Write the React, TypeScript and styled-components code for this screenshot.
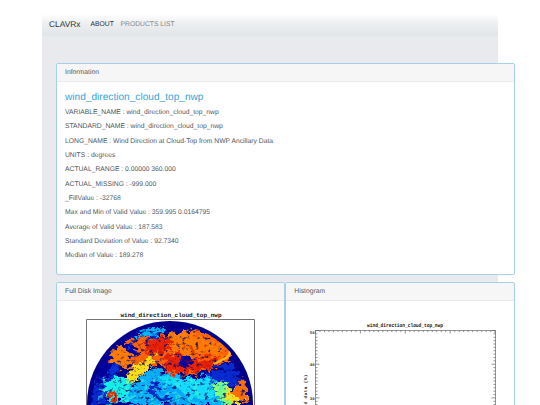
import React from "react";
import styled, { createGlobalStyle } from "styled-components";

const GlobalStyle = createGlobalStyle`
  * { box-sizing: border-box; }
  html, body { margin: 0; height: 100%; overflow: hidden; background: #fff; }
  body {
    font-family: "Liberation Sans", Arial, sans-serif;
    color: #53575d;
    text-rendering: geometricPrecision;
  }
`;

const Page = styled.main`
  width: 456px;
  height: 391px;
  margin: 14px 0 0 42px;
  background: #e8eaee;
`;

const Navbar = styled.nav`
  display: flex;
  align-items: center;
  height: 22px;
  padding: 0 7px 1px;
  background: linear-gradient(#fff, #eceef0 45%, #e2e5e8);
`;

const Brand = styled.a`
  width: 41.5px;
  font-size: 8.4px;
  line-height: 11px;
  margin-top: -1px;
  color: #303438;
`;

const NavLink = styled.a<{ $active?: boolean }>`
  margin-right: 6.8px;
  font-size: 6.75px;
  white-space: nowrap;
  color: ${(p) => (p.$active ? "#2b2f33" : "#85888c")};
`;

const Content = styled.div`
  display: flex;
  flex-direction: column;
  gap: 7px;
  width: 458.5px;
  margin: 27px 0 0 14px;
`;

const Columns = styled.div`
  display: flex;
`;

const Card = styled.section<{ $height: number }>`
  flex: 1 0 auto;
  width: 229px;
  height: ${(p) => p.$height}px;
  overflow: hidden;
  background: #fff;
  border: 1px solid #a5d0e7;
  border-radius: 2px;
  ${Content} > & { width: 100%; flex: none; }
`;

const CardHeader = styled.header`
  height: 18px;
  padding: 0 8px;
  font-size: 6.8px;
  line-height: 18.4px;
  background: #f6f6f6;
  border-bottom: 1px solid #e9eaeb;
`;

const CardBody = styled.div`
  padding: 9px 8px 8px;
`;

const Title = styled.h1`
  margin: 0 0 1px;
  font-size: 10.15px;
  font-weight: 400;
  line-height: 14px;
  color: #3ba4d8;
`;

const Fact = styled.p`
  margin: 0;
  font-size: 6.76px;
  line-height: 14.35px;
`;

const Plot = styled.svg`
  display: block;
  width: 227px;
  height: 104px;
`;

const facts = [
  "VARIABLE_NAME : wind_direction_cloud_top_nwp",
  "STANDARD_NAME : wind_direction_cloud_top_nwp",
  "LONG_NAME : Wind Direction at Cloud-Top from NWP Ancillary Data",
  "UNITS : degrees",
  "ACTUAL_RANGE : 0.00000 360.000",
  "ACTUAL_MISSING : -999.000",
  "_FillValue : -32768",
  "Max and Min of Valid Value : 359.995 0.0164795",
  "Average of Valid Value : 187.583",
  "Standard Deviation of Value : 92.7340",
  "Median of Value : 189.278",
];

const mono = '"Liberation Mono", monospace';

const regions: [string, string][] = [
  ["#0632d8", "M96 378 L116 340 L150 326 L166 332 L145 346 L122 368 L100 405 L90 405Z"],
  ["#0000a0", "M103 352 L132 331 L145 330 L130 344 L113 365 L95 390Z"],
  ["#08b4f4", "M135 333 L151 326 L166 330 L158 335 L143 337Z"],
  ["#ff7a00", "M109 352 L121 346 L130 353 L138 364 L124 369 L111 361Z"],
  ["#ff6200", "M124 342 L139 337 L157 340 L174 329 L199 330 L222 341 L234 348 L231 358 L214 368 L190 376 L170 375 L159 363 L145 371 L130 362 L140 350Z"],
  ["#e82400", "M145 341 L172 336 L176 347 L160 353 L147 354Z M164 356 L180 352 L198 362 L219 357 L214 367 L180 375 L166 369Z"],
  ["#ff7a00", "M168 332 L197 334 L225 347 L221 356 L200 352 L189 357 L172 352Z"],
  ["#ffdd15", "M119 382 L137 364 L156 352 L154 364 L138 378 L124 392Z"],
  ["#06aef8", "M123 396 L140 378 L155 366 L170 375 L187 378 L207 376 L226 391 L229 406 L134 406Z"],
  ["#13efe8", "M104 382 L120 376 L133 383 L126 400 L108 402Z"],
  ["#13dcff", "M158 377 L183 378 L207 379 L215 398 L194 398 L176 388Z"],
  ["#062bd0", "M205 373 L218 368 L232 362 L242 382 L226 386 L210 380Z"],
  ["#86ff78", "M211 385 L224 381 L235 390 L230 405 L219 401Z"],
  ["#ffde17", "M224 386 L234 391 L244 380 L249 399 L232 408Z"],
  ["#ff6f00", "M230 393 L243 378 L248 390 L246 406 L238 398Z"],
  ["#0000a5", "M178 359 L190 355 L195 362 L187 367 L177 365Z"],
  ["#0000a0", "M125 350 L136 346 L141 350 L132 355Z M167 329 L186 328 L190 332 L171 333Z"],
  ["#062bd0", "M152 380 L164 388 L174 406 L163 404 L148 390Z M91 389 L101 387 L108 405 L91 405Z"],
  ["#00a6ff", "M154 392 L166 382 L179 390 L184 402 L168 398Z"],
  ["#e83200", "M108 394 L114 390 L118 397 L112 401Z"],
];

function DiskPlot() {
  return (
    <Plot viewBox="57 301 227 104">
      <defs>
        <clipPath id="disk"><circle cx="170" cy="404" r="79.5" /></clipPath>
        <filter id="rough" x="-5%" y="-5%" width="110%" height="110%" colorInterpolationFilters="sRGB">
          <feTurbulence type="fractalNoise" baseFrequency=".17 .25" numOctaves="4" seed="9" />
          <feDisplacementMap in="SourceGraphic" scale="15" xChannelSelector="R" yChannelSelector="G" />
          <feGaussianBlur stdDeviation=".55" />
        </filter>
        <filter id="navyGrain" x="0" y="0" width="100%" height="100%" colorInterpolationFilters="sRGB">
          <feTurbulence type="fractalNoise" baseFrequency=".22 .3" numOctaves="4" seed="12" />
          <feColorMatrix values="0 0 0 0 .02  0 0 0 0 .03  0 0 0 0 .5  5 0 0 0 -2.9" />
        </filter>
        <filter id="brightGrain" x="0" y="0" width="100%" height="100%" colorInterpolationFilters="sRGB">
          <feTurbulence type="fractalNoise" baseFrequency=".16 .24" numOctaves="4" seed="27" />
          <feColorMatrix values="0 0 0 0 .2  0 0 0 0 .95  0 0 0 0 .85  0 6 0 0 -3.2" />
        </filter>
        <filter id="redGrain" x="0" y="0" width="100%" height="100%" colorInterpolationFilters="sRGB">
          <feTurbulence type="fractalNoise" baseFrequency=".22" numOctaves="3" seed="8" />
          <feColorMatrix values="0 0 0 0 .75  0 0 0 0 .08  0 0 0 0 0  0 6 0 0 -3.3" />
        </filter>
      </defs>
      <text x="120.5" y="316.8" textLength="101" lengthAdjust="spacingAndGlyphs" fontFamily={mono} fontSize="6" fontWeight="700" fill="#111">wind_direction_cloud_top_nwp</text>
      <circle cx="170" cy="404" r="83" fill="#00008c" />
      <g clipPath="url(#disk)">
        <g filter="url(#rough)">
          {regions.map(([fill, d], i) => <path key={i} d={d} fill={fill} />)}
        </g>
        <rect x="98" y="379" width="128" height="27" filter="url(#brightGrain)" opacity=".65" />
        <rect x="148" y="342" width="68" height="27" filter="url(#redGrain)" opacity=".6" />
        <rect x="88" y="321" width="165" height="85" filter="url(#navyGrain)" opacity=".8" />
        <path d="M226 345 Q234 352 226 358 L214 364" fill="none" stroke="#ffb312" strokeWidth="2.5" />
        <path d="M112 405 L119 387 L128 391 L137 381 M146 405 L157 398 L168 402 L181 398 L193 405 M133 337 L143 351 L151 345" fill="none" stroke="#102040" strokeWidth=".5" opacity=".65" />
      </g>
      <path d="M86.5 405 V319.5 H254.5 V405" fill="none" stroke="#747474" strokeWidth="1" />
    </Plot>
  );
}

function HistogramPlot() {
  const xTicks = Array.from({ length: 41 }, (_, i) => 315.5 + i * 4.49);
  const yTicks = Array.from({ length: 23 }, (_, i) => 330.5 + i * 3.37);
  return (
    <Plot viewBox="286 301 227 104">
      <text x="367" y="327.1" textLength="76" lengthAdjust="spacingAndGlyphs" fontFamily={mono} fontSize="5.4" fontWeight="700" fill="#111">wind_direction_cloud_top_nwp</text>
      <g fill="none" stroke="#666" strokeWidth=".7">
        <path d="M315.5 405 V330.5 H495.5 V405" />
        {xTicks.map((x, i) => <path key={i} d={`M${x} 330.5v${i % 10 === 0 ? 3 : 1.6}`} />)}
        {yTicks.map((y, i) => (
          <path key={i} d={`M315.5 ${y}h${i % 10 === 0 ? 4 : 2} M495.5 ${y}h${i % 10 === 0 ? -4 : -2}`} />
        ))}
      </g>
      <g fontFamily={mono} fontSize="4" fontWeight="700" fill="#333" textAnchor="end">
        <text x="314.6" y="333.6">50</text>
        <text x="314.6" y="365.8">40</text>
        <text x="314.6" y="399.6">30</text>
      </g>
      <text transform="translate(307.3 404.5) rotate(-90)" textLength="30" lengthAdjust="spacing" fontFamily={mono} fontSize="4.4" fontWeight="700" fill="#222">d data (%)</text>
    </Plot>
  );
}

export default function App() {
  return (
    <>
      <GlobalStyle />
      <Page>
        <Navbar>
          <Brand>CLAVRx</Brand>
          <NavLink $active>ABOUT</NavLink>
          <NavLink>PRODUCTS LIST</NavLink>
        </Navbar>
        <Content>
          <Card $height={212}>
            <CardHeader>Information</CardHeader>
            <CardBody>
              <Title>wind_direction_cloud_top_nwp</Title>
              {facts.map((fact) => <Fact key={fact}>{fact}</Fact>)}
            </CardBody>
          </Card>
          <Columns>
            <Card $height={140}>
              <CardHeader>Full Disk Image</CardHeader>
              <DiskPlot />
            </Card>
            <Card $height={140}>
              <CardHeader>Histogram</CardHeader>
              <HistogramPlot />
            </Card>
          </Columns>
        </Content>
      </Page>
    </>
  );
}
